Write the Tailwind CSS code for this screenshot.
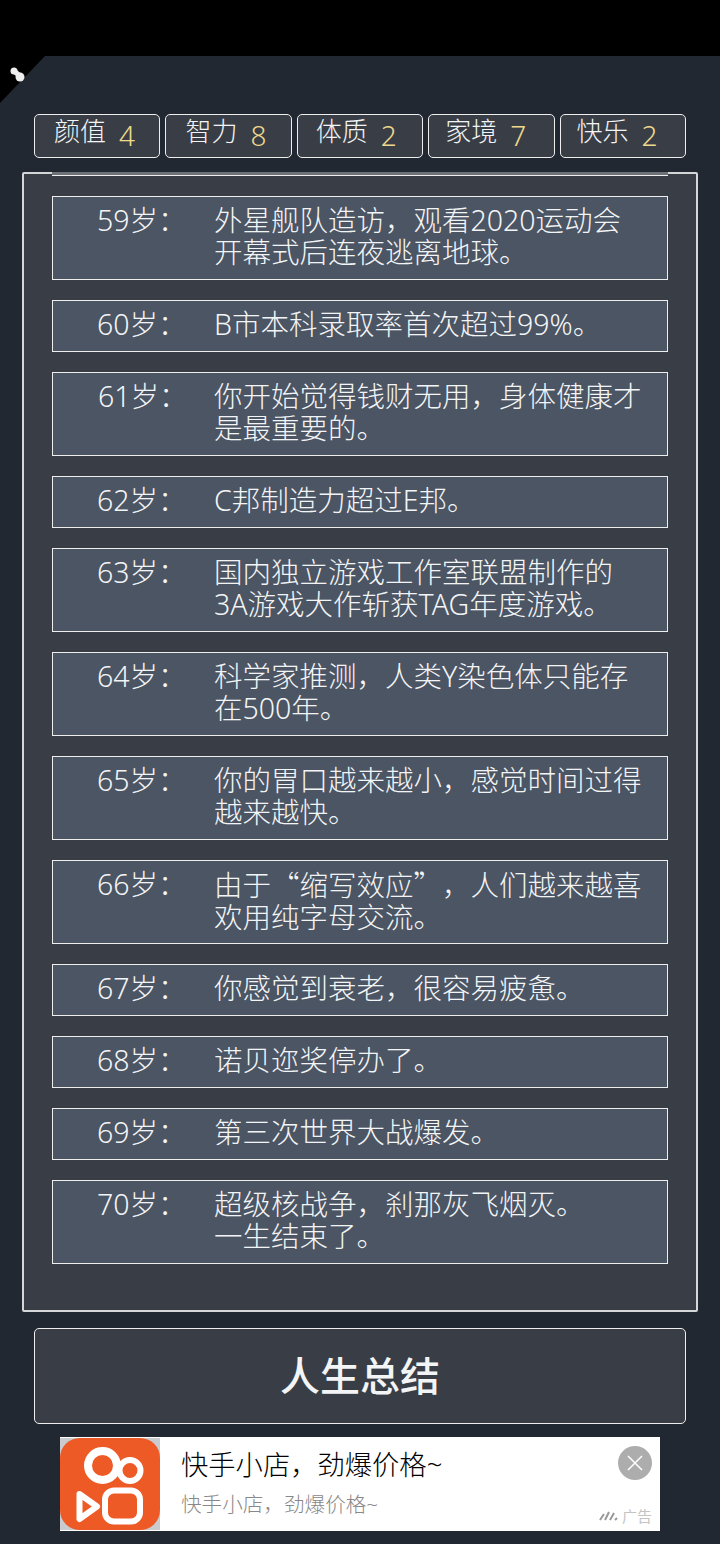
<!DOCTYPE html>
<html lang="zh-CN">
<head>
  <meta charset="UTF-8" />
  <meta name="viewport" content="width=device-width, initial-scale=1.0"/>
  <title>人生重开模拟器</title>
  <script src="https://cdn.jsdelivr.net/npm/@tailwindcss/browser@4"></script>
</head>
<body class="bg-[#222831] font-['Noto_Sans','Noto_Sans_CJK_SC',sans-serif]">
<div class="relative w-[720px] h-[1544px] overflow-hidden flex flex-col">

  <!-- status bar + corner -->
  <div class="h-14 bg-black shrink-0"></div>
  <svg class="absolute left-0 top-14" width="46" height="48" viewBox="0 0 46 48">
    <polygon points="0,0 45,0 0,47" fill="#000"/>
    <path d="M14 15 L20 20" stroke="#eee" stroke-width="5"/>
    <circle cx="14" cy="15" r="3.5" fill="#eee"/>
    <circle cx="20" cy="21" r="4.5" fill="#eee"/>
  </svg>

  <!-- attributes -->
  <div class="mt-[58px] mx-[34px] h-11 grid grid-cols-5 gap-[5px] shrink-0 text-[#f3f4f6] font-light">
    <div class="border border-[#eeeeee] rounded-[5px] bg-[#393e46] flex pl-[19px]"><span class="text-[26px] leading-[32px]">颜值</span><span class="ml-[13px] mt-[4px] text-[28px] leading-[32px] text-[#f0d98c]">4</span></div>
    <div class="border border-[#eeeeee] rounded-[5px] bg-[#393e46] flex pl-[19px]"><span class="text-[26px] leading-[32px]">智力</span><span class="ml-[13px] mt-[4px] text-[28px] leading-[32px] text-[#f0d98c]">8</span></div>
    <div class="border border-[#eeeeee] rounded-[5px] bg-[#393e46] flex pl-[18px]"><span class="text-[26px] leading-[32px]">体质</span><span class="ml-[13px] mt-[4px] text-[28px] leading-[32px] text-[#f0d98c]">2</span></div>
    <div class="border border-[#eeeeee] rounded-[5px] bg-[#393e46] flex pl-4"><span class="text-[26px] leading-[32px]">家境</span><span class="ml-[13px] mt-[4px] text-[28px] leading-[32px] text-[#f0d98c]">7</span></div>
    <div class="border border-[#eeeeee] rounded-[5px] bg-[#393e46] flex pl-4"><span class="text-[26px] leading-[32px]">快乐</span><span class="ml-[13px] mt-[4px] text-[28px] leading-[32px] text-[#f0d98c]">2</span></div>
  </div>

  <!-- trajectory -->
  <div class="mt-[14px] mx-[22px] h-[1140px] shrink-0 border-2 border-[#d4d6d8] rounded-[2px] bg-[#393e46] px-7 text-[#f3f4f6] text-[28.5px] leading-8 font-light [text-spacing-trim:space-all]">
    <div class="mt-[-2px] h-1 bg-[#6d7279] border-b border-[#eeeeee]"></div>
    <div class="mt-5 flex flex-col gap-5">
      <div class="flex border border-[#eeeeee] bg-[#4b5563] h-[84px] pt-[7px]"><div class="w-[161px] pl-[44px]">59岁：</div><div class="w-[430px]">外星舰队造访，观看2020运动会开幕式后连夜逃离地球。</div></div>
      <div class="flex border border-[#eeeeee] bg-[#4b5563] h-[52px] pt-[7px]"><div class="w-[161px] pl-[44px]">60岁：</div><div class="w-[430px]">B市本科录取率首次超过99%。</div></div>
      <div class="flex border border-[#eeeeee] bg-[#4b5563] h-[84px] pt-[7px]"><div class="w-[161px] pl-[45px]">61岁：</div><div class="w-[430px]">你开始觉得钱财无用，身体健康才是最重要的。</div></div>
      <div class="flex border border-[#eeeeee] bg-[#4b5563] h-[52px] pt-[7px]"><div class="w-[161px] pl-[44px]">62岁：</div><div class="w-[430px]">C邦制造力超过E邦。</div></div>
      <div class="flex border border-[#eeeeee] bg-[#4b5563] h-[84px] pt-[7px]"><div class="w-[161px] pl-[44px]">63岁：</div><div class="w-[430px]">国内独立游戏工作室联盟制作的3A游戏大作斩获TAG年度游戏。</div></div>
      <div class="flex border border-[#eeeeee] bg-[#4b5563] h-[84px] pt-[7px]"><div class="w-[161px] pl-[44px]">64岁：</div><div class="w-[430px]">科学家推测，人类Y染色体只能存在500年。</div></div>
      <div class="flex border border-[#eeeeee] bg-[#4b5563] h-[84px] pt-[7px]"><div class="w-[161px] pl-[44px]">65岁：</div><div class="w-[430px]">你的胃口越来越小，感觉时间过得越来越快。</div></div>
      <div class="flex border border-[#eeeeee] bg-[#4b5563] h-[84px] pt-[7px]"><div class="w-[161px] pl-[44px]">66岁：</div><div class="w-[430px] font-['Noto_Sans_CJK_SC']">由于“缩写效应”，人们越来越喜欢用纯字母交流。</div></div>
      <div class="flex border border-[#eeeeee] bg-[#4b5563] h-[52px] pt-[7px]"><div class="w-[161px] pl-[44px]">67岁：</div><div class="w-[430px]">你感觉到衰老，很容易疲惫。</div></div>
      <div class="flex border border-[#eeeeee] bg-[#4b5563] h-[52px] pt-[7px]"><div class="w-[161px] pl-[44px]">68岁：</div><div class="w-[430px]">诺贝迩奖停办了。</div></div>
      <div class="flex border border-[#eeeeee] bg-[#4b5563] h-[52px] pt-[7px]"><div class="w-[161px] pl-[44px]">69岁：</div><div class="w-[430px]">第三次世界大战爆发。</div></div>
      <div class="flex border border-[#eeeeee] bg-[#4b5563] h-[84px] pt-[7px]"><div class="w-[161px] pl-[44px]">70岁：</div><div class="w-[430px]">超级核战争，刹那灰飞烟灭。<br>一生结束了。</div></div>
    </div>
  </div>

  <!-- summary button -->
  <div class="mt-4 mx-[34px] h-[96px] shrink-0 border border-[#eeeeee] rounded-[5px] bg-[#393e46] flex items-center justify-center text-[#f3f4f6] text-[40px] leading-[60px] font-medium pb-px">人生总结</div>

  <!-- ad -->
  <div class="relative mt-[13px] mx-[60px] h-[94px] shrink-0 bg-white flex">
    <svg class="shrink-0 mt-px" width="100" height="92" viewBox="0 0 100 92">
      <rect width="100" height="92" fill="#c9cbce"/>
      <rect width="100" height="92" rx="20" fill="#ee5a26"/>
      <g fill="none" stroke="#fff" stroke-linejoin="round">
        <circle cx="42.5" cy="27.5" r="14.5" stroke-width="8"/>
        <circle cx="70" cy="32.5" r="10.5" stroke-width="6"/>
        <rect x="45" y="52.5" width="35" height="31" rx="9" stroke-width="6"/>
        <polygon points="19.5,56 37,68.5 19.5,81" stroke-width="6"/>
      </g>
    </svg>
    <div class="pl-[21px] font-light">
      <div class="mt-[10px] text-[27.3px] leading-9 text-black">快手小店，劲爆价格~</div>
      <div class="mt-[7px] text-[20.6px] leading-7 text-[#888]">快手小店，劲爆价格~</div>
    </div>
    <div class="absolute right-2 top-[9px] w-[34px] h-[34px] rounded-full bg-[#adadad] flex items-center justify-center">
      <svg width="18" height="18" viewBox="0 0 18 18"><path d="M2 2 L16 16 M16 2 L2 16" stroke="#fff" stroke-width="1.5"/></svg>
    </div>
    <div class="absolute right-2 bottom-[5px] flex items-center gap-1 text-[15px] leading-5 text-[#c4c4c4]">
      <svg width="19" height="10" viewBox="0 0 19 10"><path d="M1 9 L5 3 M6 9 L10 1 M11 9 L15 2 M16 9 L18 7" stroke="#999" stroke-width="2"/></svg>
      <span>广告</span>
    </div>
  </div>
</div>
</body>
</html>
